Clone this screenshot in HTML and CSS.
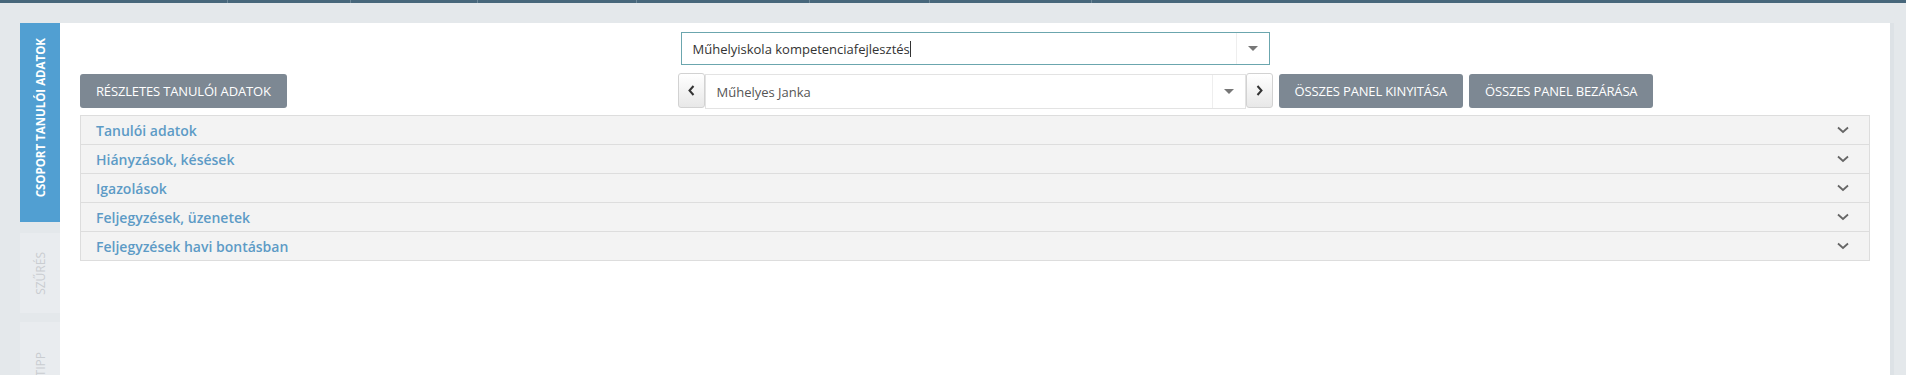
FILE: index.html
```html
<!DOCTYPE html>
<html lang="hu">
  <head>
    <meta charset="UTF-8">
    <title>Csoport tanulói adatok</title>
    <link rel="stylesheet" href="styles.css">
  </head>
  <body>
    <div class="topbar">
        <span style="width:227px"></span>
        <span style="width:122px"></span>
        <span style="width:126px"></span>
        <span style="width:158px"></span>
        <span style="width:172px"></span>
        <span style="width:119px"></span>
        <span style="width:161px"></span>
    </div>

    <div class="layout">
        <div class="sidetabs">
            <div class="sidetab active"><span>Csoport tanulói adatok</span></div>
            <div class="sidetab filter"><span>Szűrés</span></div>
            <div class="sidetab tip"><span>Tipp</span></div>
        </div>

        <div class="panel">
            <div class="row-top">
                <div class="select focused">
                    <span class="select-text">Műhelyiskola kompetenciafejlesztés<i class="cursor"></i></span>
                    <span class="select-arrow"><b class="caret"></b></span>
                </div>
            </div>

            <div class="row-tools">
                <div class="tools-left">
                    <button class="btn">Részletes tanulói adatok</button>
                </div>
                <div class="student-nav">
                    <button class="nav-btn">
                        <svg width="7" height="11" viewBox="0 0 7 11"><polyline points="5.5,1 1.5,5.5 5.5,10" fill="none" stroke="#333" stroke-width="2"/></svg>
                    </button>
                    <div class="select student">
                        <span class="select-text">Műhelyes Janka</span>
                        <span class="select-arrow"><b class="caret"></b></span>
                    </div>
                    <button class="nav-btn">
                        <svg width="7" height="11" viewBox="0 0 7 11"><polyline points="1.5,1 5.5,5.5 1.5,10" fill="none" stroke="#333" stroke-width="2"/></svg>
                    </button>
                </div>
                <div class="tools-right">
                    <button class="btn">Összes panel kinyitása</button>
                    <button class="btn">Összes panel bezárása</button>
                </div>
            </div>

            <div class="accordion">
                <div class="acc-row"><span>Tanulói adatok</span><svg class="chev" width="12" height="8" viewBox="0 0 12 8"><polyline points="1,1.5 6,6 11,1.5" fill="none" stroke="#666" stroke-width="1.8"/></svg></div>
                <div class="acc-row"><span>Hiányzások, késések</span><svg class="chev" width="12" height="8" viewBox="0 0 12 8"><polyline points="1,1.5 6,6 11,1.5" fill="none" stroke="#666" stroke-width="1.8"/></svg></div>
                <div class="acc-row"><span>Igazolások</span><svg class="chev" width="12" height="8" viewBox="0 0 12 8"><polyline points="1,1.5 6,6 11,1.5" fill="none" stroke="#666" stroke-width="1.8"/></svg></div>
                <div class="acc-row"><span>Feljegyzések, üzenetek</span><svg class="chev" width="12" height="8" viewBox="0 0 12 8"><polyline points="1,1.5 6,6 11,1.5" fill="none" stroke="#666" stroke-width="1.8"/></svg></div>
                <div class="acc-row"><span>Feljegyzések havi bontásban</span><svg class="chev" width="12" height="8" viewBox="0 0 12 8"><polyline points="1,1.5 6,6 11,1.5" fill="none" stroke="#666" stroke-width="1.8"/></svg></div>
            </div>
        </div>
    </div>
  </body>
</html>
```

FILE: styles.css
```css
html, body {
    margin: 0;
    height: 100%;
    overflow: hidden;
}
body {
    background: #e4e8eb;
    font-family: "Open Sans", "Noto Sans", sans-serif;
    font-size: 13px;
    color: #333;
}
.topbar {
    display: flex;
    height: 3px;
    background: #47677b;
}
.topbar span {
    border-right: 1px solid #6d8797;
}
.layout {
    display: flex;
    padding-top: 20px;
    height: calc(100% - 23px);
}
.sidetabs {
    width: 40px;
    margin-left: 20px;
    display: flex;
    flex-direction: column;
    overflow: hidden;
}
.sidetab {
    flex-shrink: 0;
    display: flex;
    align-items: center;
    justify-content: center;
    text-transform: uppercase;
}
.sidetab span {
    writing-mode: vertical-rl;
    transform: rotate(180deg);
    white-space: nowrap;
}
.sidetab.active {
    height: 199px;
    padding-bottom: 10px;
    box-sizing: border-box;
    background: #519fd2;
    color: #fff;
    font-weight: 700;
    font-size: 11.5px;
}
.sidetab.filter {
    height: 80px;
    margin-top: 11px;
    background: #e9ecef;
    color: #c9cdd1;
    font-size: 12px;
}
.sidetab.tip {
    height: 80px;
    margin-top: 9px;
    background: #e9ecef;
    color: #c9cdd1;
    font-size: 12px;
    align-items: flex-start;
    padding-top: 30px;
}
.panel {
    flex: 1;
    margin-right: 16px;
    background: #fff;
    box-shadow: 4px 0 0 #dde2e6;
    padding: 9px 20px;
}
.row-top {
    display: flex;
    justify-content: center;
}
.select {
    display: flex;
    align-items: center;
    background: #fff;
    box-sizing: border-box;
}
.select.focused {
    width: 589px;
    height: 33px;
    border: 1px solid #6ba6ae;
}
.select-text {
    flex: 1;
    padding-left: 11px;
    white-space: nowrap;
}
.cursor {
    display: inline-block;
    width: 1px;
    height: 16px;
    background: #333;
    vertical-align: -3px;
}
.select-arrow {
    width: 32px;
    align-self: stretch;
    display: flex;
    align-items: center;
    justify-content: center;
    border-left: 1px solid #eee;
}
.caret {
    width: 0;
    height: 0;
    border-left: 5px solid transparent;
    border-right: 5px solid transparent;
    border-top: 5px solid #777;
}
.row-tools {
    display: grid;
    grid-template-columns: 1fr auto 1fr;
    align-items: center;
    margin-top: 8px;
}
.tools-left, .tools-right {
    display: flex;
    gap: 6px;
}
.tools-right {
    padding-left: 6px;
}
.btn {
    height: 34px;
    padding: 0 16px;
    border: none;
    border-radius: 3px;
    background: #7d8893;
    color: #fff;
    font-family: inherit;
    font-size: 13px;
    text-transform: uppercase;
    letter-spacing: -0.15px;
    white-space: nowrap;
}
.student-nav {
    display: flex;
    width: 595px;
    height: 35px;
}
.nav-btn {
    width: 27px;
    padding: 0;
    border: 1px solid #d2d2d2;
    border-radius: 3px;
    background: linear-gradient(#fff, #e8e8e8);
    display: flex;
    align-items: center;
    justify-content: center;
}
.select.student {
    flex: 1;
    margin: 1px 0 -1px;
    border: 1px solid #e3e3e3;
    color: #555;
}
.accordion {
    margin-top: 7px;
    border: 1px solid #ddd;
}
.acc-row {
    height: 28px;
    display: flex;
    align-items: center;
    justify-content: space-between;
    padding: 0 20px 0 15px;
    background: #f3f3f3;
    border-bottom: 1px solid #ddd;
    color: #5d9bc6;
    font-weight: 600;
    font-size: 14px;
}
.acc-row:last-child {
    border-bottom: none;
}
```
